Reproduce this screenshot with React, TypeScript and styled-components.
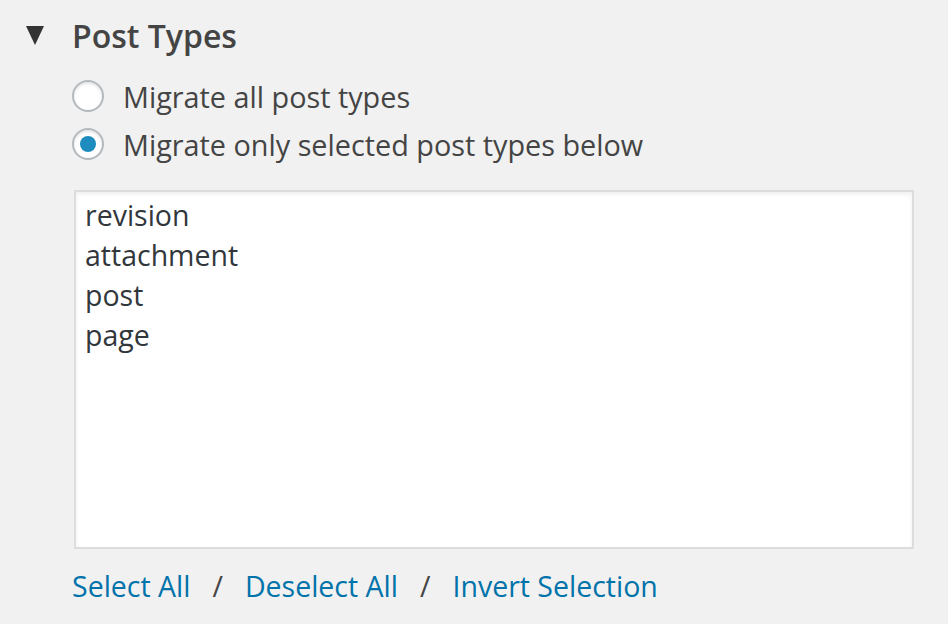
import styled, { createGlobalStyle } from "styled-components";

const GlobalStyle = createGlobalStyle`
  html, body {
    margin: 0;
    padding: 0;
    background: #f1f1f1;
    font-family: "Open Sans", "Noto Sans", sans-serif;
    color: #444;
  }
`

const Page = styled.div`
  padding: 12px 0 0 26px;
`

const Header = styled.div`
  display: flex;
  align-items: center;
  gap: 28px;
  height: 46px;
`

const Arrow = styled.span`
  width: 0;
  height: 0;
  border-left: 9.5px solid transparent;
  border-right: 9.5px solid transparent;
  border-top: 19px solid #333;
`

const Title = styled.h2`
  margin: 0;
  font-size: 32px;
  font-weight: 600;
  color: #444;
`

const Body = styled.div`
  padding: 16px 0 0 46px;
`

const Options = styled.div`
  display: flex;
  flex-direction: column;
  gap: 4px;
`

const Option = styled.label`
  display: flex;
  align-items: center;
  gap: 19px;
  height: 44px;
  font-size: 28.8px;
  color: #444;
`

const Radio = styled.span<{ $checked?: boolean }>`
  position: relative;
  flex: none;
  width: 28px;
  height: 28px;
  border-radius: 50%;
  border: 2px solid #b4b9be;
  background: #fff;
  box-shadow: inset 0 2px 3px rgba(0, 0, 0, 0.1);

  &::after {
    content: "";
    display: ${(p) => (p.$checked ? "block" : "none")};
    position: absolute;
    left: 50%;
    top: 50%;
    width: 16px;
    height: 16px;
    margin: -8px 0 0 -8px;
    border-radius: 50%;
    background: #1e8cbe;
  }
`

const ListBox = styled.div`
  margin: 24px 0 0 2px;
  width: 836px;
  height: 352px;
  box-sizing: content-box;
  border: 2px solid #ddd;
  background: #fff;
  box-shadow: inset 0 2px 4px rgba(0, 0, 0, 0.07);
  display: flex;
  flex-direction: column;
  padding-top: 3px;
`

const ListItem = styled.div`
  padding-left: 9px;
  height: 40px;
  line-height: 40px;
  font-size: 28.5px;
  color: #32373c;
`

const Links = styled.div`
  display: flex;
  align-items: center;
  gap: 22px;
  margin-top: 17px;
  height: 40px;
  font-size: 28.5px;
`

const Link = styled.a`
  color: #0073aa;
  text-decoration: none;
  cursor: pointer;
`

const Sep = styled.span`
  color: #444;
`

const types = ["revision", "attachment", "post", "page"]

export default function App() {
  return (
    <>
      <GlobalStyle />
      <Page>
        <Header>
          <Arrow />
          <Title>Post Types</Title>
        </Header>
        <Body>
          <Options>
            <Option><Radio />Migrate all post types</Option>
            <Option><Radio $checked />Migrate only selected post types below</Option>
          </Options>
          <ListBox>
            {types.map((t) => <ListItem key={t}>{t}</ListItem>)}
          </ListBox>
          <Links>
            <Link>Select All</Link>
            <Sep>/</Sep>
            <Link>Deselect All</Link>
            <Sep>/</Sep>
            <Link>Invert Selection</Link>
          </Links>
        </Body>
      </Page>
    </>
  )
}
